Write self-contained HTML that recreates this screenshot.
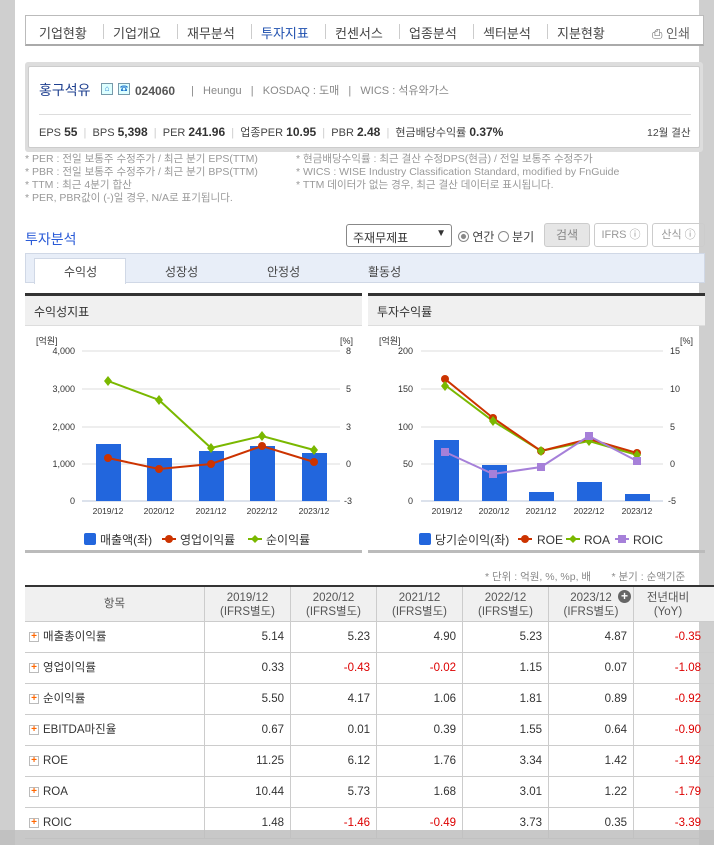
<!DOCTYPE html>
<html><head><meta charset="utf-8">
<style>
*{margin:0;padding:0;box-sizing:border-box}
body{width:714px;height:845px;overflow:hidden;background:#cfcfcf;font-family:"Liberation Sans","Noto Sans CJK KR","NanumGothic",sans-serif;color:#333;position:relative}
.a{position:absolute}
#page{position:absolute;left:15px;top:0;width:684px;height:845px;background:#fff}
.nav{left:10px;top:15px;width:679px;height:31px;border:1px solid #bbb;border-bottom:2px solid #aaa;background:#fff}
.nav span{position:absolute;top:7px;font-size:13px;color:#444}
.nav i{position:absolute;top:8px;width:1px;height:15px;background:#ccc}
.info{left:10px;top:62px;width:678px;height:90px;background:#ddd;border-radius:3px}
.infoin{left:3px;top:4px;width:672px;height:82px;background:#fff;border:1px solid #ccc;border-radius:2px}
.small{font-size:11px;color:#888}
.note{font-size:10.5px;color:#999;line-height:13px}
.tab{font-size:12px;color:#444;position:absolute;top:8px}
.th{position:absolute;top:0;height:34px;text-align:center;font-size:11.5px;color:#555;line-height:14px;padding-top:4px;border-right:1px solid #ccc}
.row{position:absolute;left:10px;width:690px;height:31px;border-bottom:1px solid #ccc;font-size:11.5px}
.row .c{position:absolute;top:0;height:31px;line-height:31px;text-align:right;padding-right:6px;border-right:1px solid #ccc;color:#333}
.row .n{color:#d00}
.pl{display:inline-block;width:10px;height:10px;border:1px solid #bbb;background:#fff;color:#f60;font-size:10px;line-height:8px;text-align:center;font-weight:bold;margin:0 4px 0 4px;vertical-align:middle}
</style></head><body>
<div id="page">
<div class="a nav">
<span style="left:13px">기업현황</span><i style="left:77px"></i>
<span style="left:87px">기업개요</span><i style="left:151px"></i>
<span style="left:161px">재무분석</span><i style="left:225px"></i>
<span style="left:235px;color:#1e4fae">투자지표</span><i style="left:299px"></i>
<span style="left:309px">컨센서스</span><i style="left:373px"></i>
<span style="left:383px">업종분석</span><i style="left:447px"></i>
<span style="left:457px">섹터분석</span><i style="left:521px"></i>
<span style="left:531px">지분현황</span>
<span style="left:626px;color:#666">⎙ 인쇄</span>
</div>
<div class="a info"><div class="a infoin">
<div class="a" style="left:10px;top:13px;font-size:14px;color:#1e3f8f">홍구석유</div>
<div class="a" style="left:72px;top:16px;width:12px;height:12px;border:1px solid #79a;background:#dff;font-size:8px;color:#27c;text-align:center;line-height:10px">⌂</div>
<div class="a" style="left:89px;top:16px;width:12px;height:12px;border:1px solid #79a;background:#dff;font-size:8px;color:#27c;text-align:center;line-height:10px">☎</div>
<div class="a" style="left:106px;top:17px;font-size:12px;font-weight:bold;color:#555">024060</div>
<div class="a small" style="left:162px;top:15px">|&nbsp;&nbsp; Heungu &nbsp;&nbsp;|&nbsp;&nbsp; KOSDAQ : 도매 &nbsp;&nbsp;|&nbsp;&nbsp; WICS : 석유와가스</div>
<div class="a" style="left:10px;top:47px;width:652px;height:1px;background:#ddd"></div>
<div class="a" style="left:10px;top:57px;font-size:11px;color:#444;white-space:nowrap">EPS <b style="font-size:12px;color:#333">55</b> <span style="color:#ccc">&nbsp;|&nbsp;</span> BPS <b style="font-size:12px;color:#333">5,398</b> <span style="color:#ccc">&nbsp;|&nbsp;</span> PER <b style="font-size:12px;color:#333">241.96</b> <span style="color:#ccc">&nbsp;|&nbsp;</span> 업종PER <b style="font-size:12px;color:#333">10.95</b> <span style="color:#ccc">&nbsp;|&nbsp;</span> PBR <b style="font-size:12px;color:#333">2.48</b> <span style="color:#ccc">&nbsp;|&nbsp;</span> 현금배당수익률 <b style="font-size:12px;color:#333">0.37%</b></div>
<div class="a" style="left:618px;top:58px;font-size:10.5px;color:#444">12월 결산</div>
</div></div>
<div class="a note" style="left:10px;top:153px">* PER : 전일 보통주 수정주가 / 최근 분기 EPS(TTM)<br>* PBR : 전일 보통주 수정주가 / 최근 분기 BPS(TTM)<br>* TTM : 최근 4분기 합산<br>* PER, PBR값이 (-)일 경우, N/A로 표기됩니다.</div>
<div class="a note" style="left:281px;top:153px">* 현금배당수익률 : 최근 결산 수정DPS(현금) / 전일 보통주 수정주가<br>* WICS : WISE Industry Classification Standard, modified by FnGuide<br>* TTM 데이터가 없는 경우, 최근 결산 데이터로 표시됩니다.</div>

<div class="a" style="left:10px;top:229px;font-size:14px;color:#2a5bd7">투자분석</div>
<div class="a" style="left:331px;top:224px;width:106px;height:23px;border:1px solid #888;border-radius:3px;font-size:12px;padding:4px 0 0 6px">주재무제표<span style="position:absolute;right:5px;top:3px;font-size:10px">▼</span></div>
<div class="a" style="left:443px;top:228px;font-size:12px;color:#444"><span style="display:inline-block;width:11px;height:11px;border:1px solid #888;border-radius:50%;background:radial-gradient(#888 35%,#fff 45%);vertical-align:-1px"></span> 연간 <span style="display:inline-block;width:11px;height:11px;border:1px solid #888;border-radius:50%;vertical-align:-1px"></span> 분기</div>
<div class="a" style="left:529px;top:223px;width:46px;height:24px;border:1px solid #ccc;border-radius:3px;background:#e6e6e6;font-size:12px;color:#888;text-align:center;line-height:22px">검색</div>
<div class="a" style="left:579px;top:223px;width:54px;height:24px;border:1px solid #ccc;border-radius:3px;font-size:11px;color:#999;text-align:center;line-height:22px">IFRS ⓘ</div>
<div class="a" style="left:637px;top:223px;width:53px;height:24px;border:1px solid #ccc;border-radius:3px;font-size:11px;color:#999;text-align:center;line-height:22px">산식 ⓘ</div>

<div class="a" style="left:10px;top:253px;width:680px;height:30px;background:#e8eef8;border:1px solid #d0d8e6"></div>
<div class="a" style="left:19px;top:258px;width:92px;height:26px;background:#fff;border:1px solid #d0d8e6;border-bottom:none"></div>
<span class="tab" style="left:49px;top:263px">수익성</span>
<span class="tab" style="left:150px;top:263px">성장성</span>
<span class="tab" style="left:252px;top:263px">안정성</span>
<span class="tab" style="left:353px;top:263px">활동성</span>

<div class="a" style="left:10px;top:293px;width:337px;height:33px;background:#f0f0f0;border-top:3px solid #333;border-bottom:1px solid #ddd;font-size:12px;padding:7px 0 0 9px">수익성지표</div>
<div class="a" style="left:353px;top:293px;width:337px;height:33px;background:#f0f0f0;border-top:3px solid #333;border-bottom:1px solid #ddd;font-size:12px;padding:7px 0 0 9px">투자수익률</div>
<div class="a" style="left:10px;top:550px;width:337px;height:3px;background:#bbb"></div>
<div class="a" style="left:353px;top:550px;width:337px;height:3px;background:#bbb"></div>

<svg class="a" style="left:-15px;top:0" width="714" height="560" font-family="Liberation Sans, Noto Sans CJK KR, sans-serif">
<g font-size="9" fill="#333">
<text x="36" y="344">[억원]</text><text x="340" y="344">[%]</text>
<g stroke="#ddd"><line x1="82" y1="351" x2="340" y2="351"/><line x1="82" y1="389" x2="340" y2="389"/><line x1="82" y1="427" x2="340" y2="427"/><line x1="82" y1="464" x2="340" y2="464"/></g>
<line x1="82" y1="501" x2="340" y2="501" stroke="#b8c4d8"/>
<g text-anchor="end"><text x="75" y="354">4,000</text><text x="75" y="392">3,000</text><text x="75" y="430">2,000</text><text x="75" y="467">1,000</text><text x="75" y="504">0</text></g>
<g><text x="346" y="354">8</text><text x="346" y="392">5</text><text x="346" y="430">3</text><text x="346" y="467">0</text><text x="344" y="504">-3</text></g>
<g fill="#2266dd"><rect x="96" y="444" width="25" height="57"/><rect x="147" y="458" width="25" height="43"/><rect x="199" y="451" width="25" height="50"/><rect x="250" y="446" width="25" height="55"/><rect x="302" y="453" width="25" height="48"/></g>
<g text-anchor="middle" font-size="8.5"><text x="108" y="514">2019/12</text><text x="159" y="514">2020/12</text><text x="211" y="514">2021/12</text><text x="262" y="514">2022/12</text><text x="314" y="514">2023/12</text></g>
<polyline points="108,381 159,400 211,448 262,436 314,450" fill="none" stroke="#7ab800" stroke-width="2"/>
<g fill="#7ab800"><path d="M108,376l4,5-4,5-4-5z"/><path d="M159,395l4,5-4,5-4-5z"/><path d="M211,443l4,5-4,5-4-5z"/><path d="M262,431l4,5-4,5-4-5z"/><path d="M314,445l4,5-4,5-4-5z"/></g>
<polyline points="108,458 159,469 211,464 262,446 314,462" fill="none" stroke="#cc3300" stroke-width="2"/>
<g fill="#cc3300"><circle cx="108" cy="458" r="4"/><circle cx="159" cy="469" r="4"/><circle cx="211" cy="464" r="4"/><circle cx="262" cy="446" r="4"/><circle cx="314" cy="462" r="4"/></g>
<g font-size="12"><rect x="84" y="533" width="12" height="12" rx="2" fill="#2266dd"/><text x="100" y="544">매출액(좌)</text>
<line x1="162" y1="539" x2="176" y2="539" stroke="#cc3300" stroke-width="2"/><circle cx="169" cy="539" r="4" fill="#cc3300"/><text x="180" y="544">영업이익률</text>
<line x1="248" y1="539" x2="262" y2="539" stroke="#7ab800" stroke-width="2"/><path d="M255,535l4,4-4,4-4-4z" fill="#7ab800"/><text x="266" y="544">순이익률</text></g>

<text x="379" y="344">[억원]</text><text x="680" y="344">[%]</text>
<g stroke="#ddd"><line x1="421" y1="351" x2="663" y2="351"/><line x1="421" y1="389" x2="663" y2="389"/><line x1="421" y1="427" x2="663" y2="427"/><line x1="421" y1="464" x2="663" y2="464"/></g>
<line x1="421" y1="501" x2="663" y2="501" stroke="#b8c4d8"/>
<g text-anchor="end"><text x="413" y="354">200</text><text x="413" y="392">150</text><text x="413" y="430">100</text><text x="413" y="467">50</text><text x="413" y="504">0</text></g>
<g><text x="670" y="354">15</text><text x="670" y="392">10</text><text x="670" y="430">5</text><text x="670" y="467">0</text><text x="668" y="504">-5</text></g>
<g fill="#2266dd"><rect x="434" y="440" width="25" height="61"/><rect x="482" y="465" width="25" height="36"/><rect x="529" y="492" width="25" height="9"/><rect x="577" y="482" width="25" height="19"/><rect x="625" y="494" width="25" height="7"/></g>
<g text-anchor="middle" font-size="8.5"><text x="447" y="514">2019/12</text><text x="494" y="514">2020/12</text><text x="541" y="514">2021/12</text><text x="589" y="514">2022/12</text><text x="637" y="514">2023/12</text></g>
<polyline points="445,385 493,421 541,451 589,441 637,455" fill="none" stroke="#7ab800" stroke-width="2"/>
<polyline points="445,379 493,418 541,451 589,439 637,453" fill="none" stroke="#cc3300" stroke-width="2"/>
<g fill="#cc3300"><circle cx="445" cy="379" r="4"/><circle cx="493" cy="418" r="4"/><circle cx="541" cy="451" r="4"/><circle cx="589" cy="439" r="4"/><circle cx="637" cy="453" r="4"/></g>
<g fill="#7ab800"><path d="M445,381l4,5-4,5-4-5z"/><path d="M493,416l4,5-4,5-4-5z"/><path d="M541,446l4,5-4,5-4-5z"/><path d="M589,436l4,5-4,5-4-5z"/><path d="M637,450l4,5-4,5-4-5z"/></g>
<polyline points="445,452 493,474 541,467 589,436 637,461" fill="none" stroke="#a680d9" stroke-width="2"/>
<g fill="#a680d9"><rect x="441" y="448" width="8" height="8"/><rect x="489" y="470" width="8" height="8"/><rect x="537" y="463" width="8" height="8"/><rect x="585" y="432" width="8" height="8"/><rect x="633" y="457" width="8" height="8"/></g>
<g font-size="12"><rect x="419" y="533" width="12" height="12" rx="2" fill="#2266dd"/><text x="435" y="544">당기순이익(좌)</text>
<line x1="518" y1="539" x2="532" y2="539" stroke="#cc3300" stroke-width="2"/><circle cx="525" cy="539" r="4" fill="#cc3300"/><text x="537" y="544">ROE</text>
<line x1="566" y1="539" x2="580" y2="539" stroke="#7ab800" stroke-width="2"/><path d="M573,535l4,4-4,4-4-4z" fill="#7ab800"/><text x="584" y="544">ROA</text>
<line x1="615" y1="539" x2="629" y2="539" stroke="#a680d9" stroke-width="2"/><rect x="618" y="535" width="8" height="8" fill="#a680d9"/><text x="633" y="544">ROIC</text></g>
</g>
</svg>

<div class="a" style="left:470px;top:569px;font-size:10.5px;color:#888;white-space:nowrap">* 단위 : 억원, %, %p, 배 &nbsp;&nbsp;&nbsp;&nbsp;&nbsp; * 분기 : 순액기준</div>
<div class="a" style="left:10px;top:585px;width:690px;height:37px;background:#f0f0f0;border-top:2px solid #333;border-bottom:1px solid #ccc">
<div class="th" style="left:0;width:180px;padding-top:10px">항목</div>
<div class="th" style="left:180px;width:86px">2019/12<br>(IFRS별도)</div>
<div class="th" style="left:266px;width:86px">2020/12<br>(IFRS별도)</div>
<div class="th" style="left:352px;width:86px">2021/12<br>(IFRS별도)</div>
<div class="th" style="left:438px;width:86px">2022/12<br>(IFRS별도)</div>
<div class="th" style="left:524px;width:85px">2023/12<br>(IFRS별도)<span style="position:absolute;right:2px;top:3px;width:13px;height:13px;border-radius:50%;background:#666;color:#fff;font-size:12px;line-height:13px;font-weight:bold">+</span></div>
<div class="th" style="left:609px;width:81px;border-right:none;padding-right:13px">전년대비<br>(YoY)</div>
</div>
<div id="rows"></div>
</div>
<script>
var d=[["매출총이익률","5.14","5.23","4.90","5.23","4.87","-0.35"],["영업이익률","0.33","-0.43","-0.02","1.15","0.07","-1.08"],["순이익률","5.50","4.17","1.06","1.81","0.89","-0.92"],["EBITDA마진율","0.67","0.01","0.39","1.55","0.64","-0.90"],["ROE","11.25","6.12","1.76","3.34","1.42","-1.92"],["ROA","10.44","5.73","1.68","3.01","1.22","-1.79"],["ROIC","1.48","-1.46","-0.49","3.73","0.35","-3.39"]];
var L=[0,180,266,352,438,524,609],W=[180,86,86,86,86,85,81],h="";
d.forEach(function(r,i){h+='<div class="row" style="top:'+(622+i*31)+'px">';r.forEach(function(v,j){var s='left:'+L[j]+'px;width:'+W[j]+'px;';if(j==0)h+='<div class="c" style="'+s+'text-align:left;padding:0">'+'<span class="pl">+</span>'+v+'</div>';else h+='<div class="c'+(v[0]=="-"?" n":"")+'" style="'+s+(j==6?'border-right:none;padding-right:14px;':'')+'">'+v+'</div>';});h+='</div>';});
document.getElementById('rows').innerHTML=h;
</script>
<div class="a" style="left:0;top:830px;width:714px;height:15px;background:rgba(190,190,190,.85)"></div>
</body></html>
